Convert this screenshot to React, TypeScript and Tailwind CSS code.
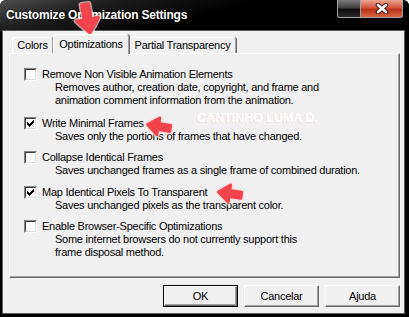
type Item = { label: string; lines: string[]; checked: boolean; gap: string };

const items: Item[] = [
  {
    label: "Remove Non Visible Animation Elements",
    lines: ["Removes author, creation date, copyright, and frame and", "animation comment information from the animation."],
    checked: false,
    gap: "mb-[10px]",
  },
  { label: "Write Minimal Frames", lines: ["Saves only the portions of frames that have changed."], checked: true, gap: "mb-[8px]" },
  { label: "Collapse Identical Frames", lines: ["Saves unchanged frames as a single frame of combined duration."], checked: false, gap: "mb-[9px]" },
  { label: "Map Identical Pixels To Transparent", lines: ["Saves unchanged pixels as the transparent color."], checked: true, gap: "mb-[8px]" },
  {
    label: "Enable Browser-Specific Optimizations",
    lines: ["Some internet browsers do not currently support this", "frame disposal method."],
    checked: false,
    gap: "",
  },
];

// classic 7x7 check glyph
const tick = ["......#", ".....##", "#...###", "##.###.", "#####..", ".###...", "..#...."];

function CheckBox({ checked }: { checked: boolean }) {
  return (
    <div className="h-[13px] w-[13px] shrink-0 border border-b-white border-l-[#808080] border-r-white border-t-[#808080]">
      <div className="h-full w-full border border-b-[#dcdcdc] border-l-[#404040] border-r-[#dcdcdc] border-t-[#404040] bg-white">
        {checked && (
          <svg width="9" height="9" viewBox="0 0 9 9" className="block" shapeRendering="crispEdges">
            {tick.map((row, y) =>
              row.split("").map((c, x) => (c === "#" ? <rect key={`${x}-${y}`} x={x + 1} y={y + 1} width="1" height="1" fill="#000" /> : null))
            )}
          </svg>
        )}
      </div>
    </div>
  );
}

function arrow(L: number, H: number, h: number, s: number) {
  return `0,0 ${h},${-H / 2} ${h},${-s / 2} ${L},${-s / 2} ${L},${s / 2} ${h},${s / 2} ${h},${H / 2}`;
}

function Arrows() {
  const big = arrow(29, 22, 14, 7);
  const small = arrow(23, 17, 11, 6);
  const shapes = [
    { pts: big, t: "translate(90 33) rotate(-100)" },
    { pts: small, t: "translate(147.5 124.5) rotate(10)" },
    { pts: small, t: "translate(218.5 192) rotate(8)" },
  ];
  return (
    <svg width="409" height="317" viewBox="0 0 409 317" className="pointer-events-none absolute left-0 top-0">
      {shapes.map((a, i) => (
        <g key={i} transform={a.t}>
          <polygon points={a.pts} fill="#ffd9d9" stroke="#ffd9d9" strokeWidth="6" strokeLinejoin="round" opacity="0.7" />
          <polygon points={a.pts} fill="#f3434d" stroke="#f3434d" strokeWidth="3" strokeLinejoin="round" />
        </g>
      ))}
    </svg>
  );
}

function Button({ label, main }: { label: string; main?: boolean }) {
  if (main) {
    return (
      <div className="h-[22px] w-[75px] border border-black">
        <div className="flex h-full w-full items-center justify-center border border-b-[#696969] border-l-white border-r-[#696969] border-t-white shadow-[inset_-1px_-1px_0_#a0a0a0]">
          {label}
        </div>
      </div>
    );
  }
  return (
    <div className="flex h-[22px] w-[75px] items-center justify-center border border-b-[#696969] border-l-white border-r-[#696969] border-t-white shadow-[inset_-1px_-1px_0_#a0a0a0]">
      {label}
    </div>
  );
}

export default function App() {
  return (
    <div className="relative h-[317px] w-[409px] rounded-t-[6px] bg-black font-['Liberation_Sans',Arial,sans-serif] text-[11px] leading-[13px] tracking-[-0.25px] text-black">
      <div className="flex h-[31px] items-start justify-between rounded-t-[6px] bg-[linear-gradient(165deg,#4d4d4d_0%,#1d1d1d_22%,#000_50%)]">
        <div className="ml-[6px] mt-[8px] text-[12px] font-bold leading-[14px] tracking-[-0.2px] text-white [text-shadow:0_0_2px_#000]">
          Customize Optimization Settings
        </div>
        <div className="mr-[6px] flex">
          <div className="h-[18px] w-[24px] rounded-bl-[3px] border border-t-0 border-[#a3a3a3] bg-[linear-gradient(#7a7a7a,#404040_45%,#0e0e0e_55%,#2a2a2a)]" />
          <div className="flex h-[18px] w-[42px] items-center justify-center rounded-br-[3px] border border-l-0 border-t-0 border-[#a3a3a3] bg-[linear-gradient(#eba592,#d0563a_45%,#b8321b_55%,#d86442)]">
            <svg width="14" height="11" viewBox="0 0 14 11" className="block">
              <path d="M3 2 L11 9 M11 2 L3 9" stroke="#4a1a10" strokeWidth="4.5" strokeLinecap="round" />
              <path d="M3 2 L11 9 M11 2 L3 9" stroke="#fff" strokeWidth="2.6" strokeLinecap="round" />
            </svg>
          </div>
        </div>
      </div>

      <div className="ml-[3px] mr-[5px] flex h-[282px] flex-col bg-[#f0f0f0] pl-[6px] pr-[4px] pt-[3px] shadow-[0_0_0_1px_#5c5c5c]">
        <div className="flex h-[19px] items-end pl-[3px]">
          <div className="flex h-[16px] w-[41px] items-center justify-center rounded-t-[3px] border-l border-r border-t border-l-white border-r-[#a0a0a0] border-t-white shadow-[1px_0_0_#696969]">
            Colors
          </div>
          <div className="relative z-10 -mb-[1px] flex h-[20px] w-[76px] items-center justify-center rounded-t-[3px] border-l border-r border-t border-l-white border-r-[#a0a0a0] border-t-white bg-[#f0f0f0] pb-[1px] shadow-[1px_0_0_#696969]">
            Optimizations
          </div>
          <div className="flex h-[16px] w-[107px] items-center justify-center rounded-t-[3px] border-l border-r border-t border-l-white border-r-[#a0a0a0] border-t-white shadow-[1px_0_0_#696969]">
            Partial Transparency
          </div>
        </div>

        <div className="relative h-[225px] border border-b-[#696969] border-l-white border-r-[#696969] border-t-white pl-[14px] pt-[14px] shadow-[inset_-1px_-1px_0_#a0a0a0]">
          {items.map((it) => (
            <div key={it.label} className={it.gap}>
              <div className="flex items-center gap-[5px]">
                <CheckBox checked={it.checked} />
                <span>{it.label}</span>
              </div>
              {it.lines.map((l) => (
                <div key={l} className="pl-[31px]">
                  {l}
                </div>
              ))}
            </div>
          ))}
          <div className="absolute left-[187px] top-[58px] text-[12.5px] font-bold leading-[12.5px] tracking-normal text-white [text-shadow:-1px_1px_0_#f6dede]">
            CANTINHO LUMA D.
          </div>
        </div>

        <div className="mt-[7px] flex justify-end gap-[6px]">
          <Button label="OK" main />
          <Button label="Cancelar" />
          <Button label="Ajuda" />
        </div>
      </div>

      <Arrows />
    </div>
  );
}
